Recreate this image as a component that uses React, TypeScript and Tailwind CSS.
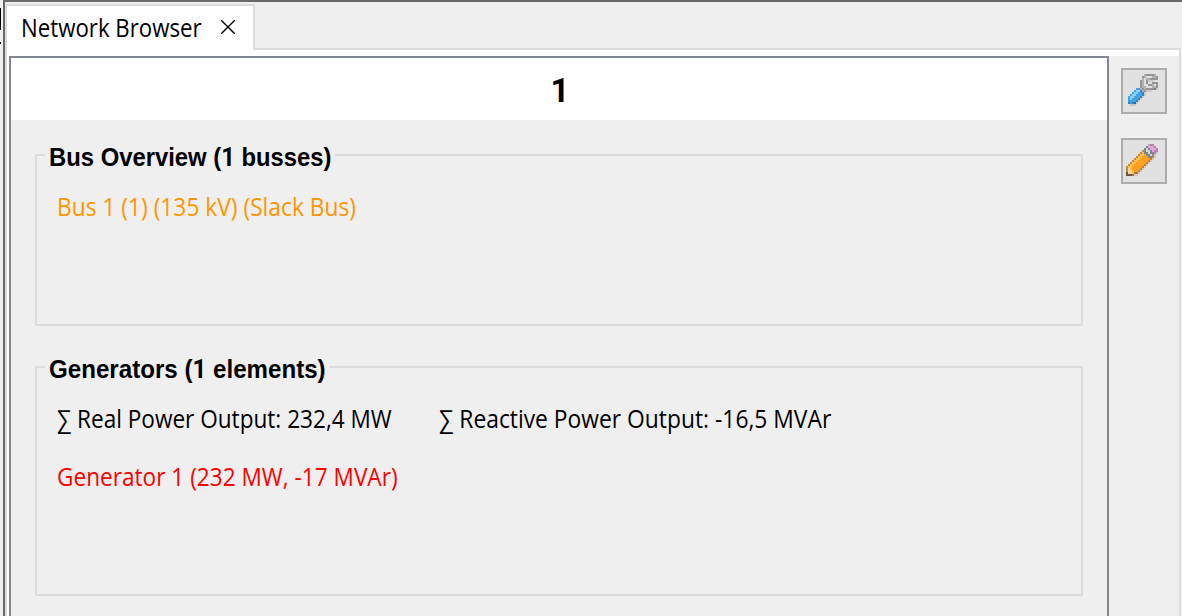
import React from "react";

const palette: Record<string, string> = {
  d: "#7f7f7f", m: "#959595", g: "#b0b0b0", l: "#dedede", s: "#c9c9c9",
  B: "#2c86c4", b: "#3ea3e0", c: "#8ad2f4", n: "#256f9e",
  O: "#cf7f22", o: "#ffa11c", y: "#ffbf4d", w: "#f0d9a2", k: "#6e5638", r: "#b5742f",
  P: "#bf7cae", p: "#e2a4d2", t: "#7f878c", u: "#d0d7da", e: "#b98a4c",
};

const wrench = [
  "........gmmmmg..",
  ".......mglllggm.",
  ".......glggmmmm.",
  "......mglmsss...",
  "......mglm..mmm.",
  "......mgllmmglm.",
  "......mgglllggm.",
  "....bbgmgmmmmds.",
  "...bccBgmsss....",
  "..bccbbBs.......",
  ".bccbbbBs.......",
  "bccbbbBs........",
  "bcbbbBs.........",
  "bbbbBs..........",
  "BbBns...........",
  ".sss............",
];

const pencil = [
  "...........gPP..",
  "..........tpppP.",
  ".........tutpppP",
  "........etuutpPP",
  ".......eyttuttPs",
  "......eyyottuts.",
  ".....eyyooottes.",
  "....eyyoooooOs..",
  "...eyyoooooOs...",
  "..eyyoooooOs....",
  ".eyyoooooOs.....",
  "eyyoooooOs......",
  "ewyooooOs.......",
  "ewwyooOs........",
  "kwwyrrs.........",
  "kkkrss..........",
];

function PixelIcon({ rows }: { rows: string[] }) {
  return (
    <svg width="32" height="32" viewBox="0 0 16 16" shapeRendering="crispEdges">
      {rows.flatMap((row, y) =>
        row.split("").map((c, x) =>
          c === "." ? null : <rect key={`${x}-${y}`} x={x} y={y} width="1" height="1" fill={palette[c]} />
        )
      )}
    </svg>
  );
}

function ToolButton({ label, rows, className }: { label: string; rows: string[]; className: string }) {
  return (
    <button aria-label={label} className={`flex h-[46px] w-[46px] items-start border-2 border-[#adadad] bg-[#e1e1e1] pt-1 ${className}`}>
      <PixelIcon rows={rows} />
    </button>
  );
}

function Group({ title, className, titleClass, children }: { title: React.ReactNode; className: string; titleClass: string; children: React.ReactNode }) {
  return (
    <section className={`border-2 border-[#dcdcdc] ${className}`}>
      <h2 className={`-mt-[14px] ml-2 flex h-[28px] items-center bg-[#efefef] pt-[2px] pl-1 font-['Liberation_Sans',sans-serif] text-[25px] font-bold ${titleClass}`}>
        {title}
      </h2>
      {children}
    </section>
  );
}

export default function App() {
  return (
    <div className="flex h-[616px] w-[1182px] overflow-hidden bg-[#efefef] font-['Open_Sans',sans-serif] text-[25px] leading-[32px] whitespace-nowrap text-black">
      <div className="flex w-[3px] flex-col">
        <div className="mt-2 h-[22px] w-px bg-black" />
        <div className="mt-3 h-[2px] w-px bg-black" />
      </div>
      <div className="flex flex-1 flex-col border-t-2 border-l-2 border-[#696969]">
        <div className="flex h-[48px] pt-[2px]">
          <div className="flex w-[250px] border-t-2 border-r-2 border-l-2 border-[#dcdcdc] bg-white pt-[5px] pl-[14px]">
            <span className="w-[200px]"><span className="inline-block origin-left scale-x-[0.89]">Network Browser</span></span>
            <svg className="mt-[9px]" width="14" height="14" viewBox="0 0 14 14" fill="none" stroke="#000" strokeWidth="1.4">
              <path d="M0 0L14 14M14 0L0 14" />
            </svg>
          </div>
          <div className="mr-[1px] flex-1 border-b-2 border-[#dcdcdc]" />
        </div>
        <div className="mr-[1px] flex flex-1 flex-col border-r-2 border-l-2 border-[#dcdcdc]">
          <div className="h-[6px] bg-white" />
          <div className="flex flex-1">
            <div className="w-[2px] bg-white" />
            <main className="flex w-[1100px] flex-col border-t-2 border-r-2 border-l-2 border-[#828790]">
              <header className="flex h-[62px] items-center justify-center bg-white pt-[3px] pl-[2px] font-[Roboto,sans-serif] text-[33px] font-bold">1</header>
              <div className="pt-[34px] pl-[24px]">
                <Group
                  className="h-[172px] w-[1048px]"
                  titleClass="w-[290px]"
                  title={<span className="inline-block origin-left scale-x-[0.953]">Bus Overview (<span className="font-[Roboto,sans-serif]">1</span> busses)</span>}
                >
                  <div className="mt-[20px] pl-5 text-[#ff9600]"><span className="inline-block origin-left scale-x-[0.91]">Bus 1 (1) (135 kV) (Slack Bus)</span></div>
                </Group>
                <Group
                  className="mt-[40px] h-[230px] w-[1048px]"
                  titleClass="w-[284px]"
                  title={<span className="inline-block origin-left scale-x-[0.965]">Generators (<span className="font-[Roboto,sans-serif]">1</span> elements)</span>}
                >
                  <div className="mt-[20px] flex pl-5">
                    <span className="w-[382px]"><span className="inline-block origin-left scale-x-[0.903]">∑ Real Power Output: 232,4 MW</span></span>
                    <span className="inline-block origin-left scale-x-[0.913]">∑ Reactive Power Output: -16,5 MVAr</span>
                  </div>
                  <div className="mt-[26px] pl-5 text-[#ff0000]"><span className="inline-block origin-left scale-x-[0.905]">Generator 1 (232 MW, -17 MVAr)</span></div>
                </Group>
              </div>
            </main>
            <aside className="flex flex-col gap-6 pt-3 pl-3">
              <ToolButton label="Settings" rows={wrench} className="pl-[5px]" />
              <ToolButton label="Edit" rows={pencil} className="pl-[3px]" />
            </aside>
          </div>
        </div>
      </div>
    </div>
  );
}
